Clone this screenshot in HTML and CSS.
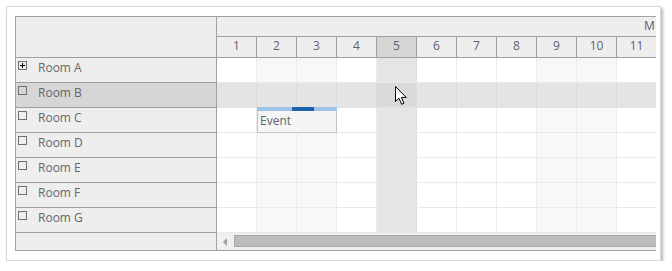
FILE: index.html
```html
<!DOCTYPE html>
<html>
<head>
<meta charset="utf-8">
<link rel="stylesheet" href="styles.css">
</head>
<body>
<div class="panel">
  <div class="scheduler">
    <div class="left">
      <div class="corner"></div>
      <div class="res"><span class="box plus"></span><span class="name">Room A</span></div>
      <div class="res hl"><span class="box"></span><span class="name">Room B</span></div>
      <div class="res"><span class="box"></span><span class="name">Room C</span></div>
      <div class="res"><span class="box"></span><span class="name">Room D</span></div>
      <div class="res"><span class="box"></span><span class="name">Room E</span></div>
      <div class="res"><span class="box"></span><span class="name">Room F</span></div>
      <div class="res"><span class="box"></span><span class="name">Room G</span></div>
      <div class="left-scroll"></div>
    </div>
    <div class="right">
      <div class="inner">
        <div class="hdr-top"><span class="month">M</span></div>
        <div class="hdr-days">
          <div class="day">1</div><div class="day">2</div><div class="day">3</div><div class="day">4</div>
          <div class="day cur">5</div><div class="day">6</div><div class="day">7</div><div class="day">8</div>
          <div class="day">9</div><div class="day">10</div><div class="day">11</div>
        </div>
        <div class="grid">
          <div class="row"><div class="c"></div><div class="c we"></div><div class="c we"></div><div class="c"></div><div class="c cur"></div><div class="c"></div><div class="c"></div><div class="c"></div><div class="c we"></div><div class="c we"></div><div class="c"></div></div>
          <div class="row hl"><div class="c"></div><div class="c we"></div><div class="c we"></div><div class="c"></div><div class="c cur"></div><div class="c"></div><div class="c"></div><div class="c"></div><div class="c we"></div><div class="c we"></div><div class="c"></div></div>
          <div class="row"><div class="c"></div><div class="c we"></div><div class="c we"></div><div class="c"></div><div class="c cur"></div><div class="c"></div><div class="c"></div><div class="c"></div><div class="c we"></div><div class="c we"></div><div class="c"></div>
            <div class="event"><div class="bar"><span class="dur"></span></div><div class="ev-body">Event</div></div>
          </div>
          <div class="row"><div class="c"></div><div class="c we"></div><div class="c we"></div><div class="c"></div><div class="c cur"></div><div class="c"></div><div class="c"></div><div class="c"></div><div class="c we"></div><div class="c we"></div><div class="c"></div></div>
          <div class="row"><div class="c"></div><div class="c we"></div><div class="c we"></div><div class="c"></div><div class="c cur"></div><div class="c"></div><div class="c"></div><div class="c"></div><div class="c we"></div><div class="c we"></div><div class="c"></div></div>
          <div class="row"><div class="c"></div><div class="c we"></div><div class="c we"></div><div class="c"></div><div class="c cur"></div><div class="c"></div><div class="c"></div><div class="c"></div><div class="c we"></div><div class="c we"></div><div class="c"></div></div>
          <div class="row"><div class="c"></div><div class="c we"></div><div class="c we"></div><div class="c"></div><div class="c cur"></div><div class="c"></div><div class="c"></div><div class="c"></div><div class="c we"></div><div class="c we"></div><div class="c"></div></div>
          <svg class="cursor" width="14" height="20" viewBox="0 0 14 20"><path d="M0.5 0.5 L0.5 15.5 L4 12.2 L6.6 18.3 L8.9 17.3 L6.4 11.4 L11.2 11.4 Z" fill="#fff" stroke="#000" stroke-width="1" stroke-linejoin="miter"/></svg>
        </div>
        <div class="hscroll"><span class="arrow"></span><span class="thumb"></span></div>
      </div>
    </div>
  </div>
</div>
</body>
</html>
```
FILE: styles.css
```css
* { box-sizing: border-box; }
body {
  margin: 0;
  background: #fff;
  font-family: "Open Sans", "Noto Sans", sans-serif;
  font-size: 12px;
  color: #666;
}
.panel {
  margin: 6px 0 0 6px;
  width: 655px;
  height: 255px;
  border: 1px solid #d8d8d8;
  box-shadow: 2px 2px 3px rgba(0,0,0,0.28);
  padding: 9px 0 0 8px;
  background: #fff;
}
.scheduler {
  display: flex;
  width: 641px;
  border: 1px solid #a0a0a0;
  border-right: none;
  overflow: hidden;
}
.left {
  width: 201px;
  flex: none;
  background: #eeeeee;
  border-right: 1px solid #a0a0a0;
}
.corner {
  height: 41px;
  border-bottom: 1px solid #a0a0a0;
}
.res {
  height: 25px;
  border-bottom: 1px solid #a0a0a0;
  display: flex;
  align-items: flex-start;
}
.res.hl { background: #d6d6d6; }
.box {
  width: 9px;
  height: 9px;
  border: 1px solid #707070;
  margin: 3px 0 0 2px;
  flex: none;
  position: relative;
}
.box.plus::before {
  content: "";
  position: absolute;
  left: 1px; top: 3px;
  width: 5px; height: 1px;
  background: #000;
}
.box.plus::after {
  content: "";
  position: absolute;
  left: 3px; top: 1px;
  width: 1px; height: 5px;
  background: #000;
}
.name {
  margin-left: 11px;
  padding-top: 2px;
  line-height: 16px;
}
.left-scroll { height: 17px; }
.right {
  width: 439px;
  flex: none;
  overflow: hidden;
}
.inner { width: 440px; }
.hdr-top {
  height: 20px;
  background: #eeeeee;
  border-bottom: 1px solid #a0a0a0;
  padding-left: 427px;
  line-height: 16px;
  padding-top: 1px;
  white-space: nowrap;
}
.month { color: #5f5878; }
.hdr-days {
  display: flex;
  height: 21px;
  border-bottom: 1px solid #a0a0a0;
  background: #eeeeee;
}
.day {
  width: 40px;
  flex: none;
  border-right: 1px solid #a0a0a0;
  text-align: center;
  line-height: 16px;
  padding-top: 1px;
  color: #646070;
}
.day.cur { background: #d6d6d6; }
.grid { position: relative; }
.row {
  display: flex;
  height: 25px;
  border-bottom: 1px solid #eaeaea;
  position: relative;
}
.c {
  width: 40px;
  flex: none;
  border-right: 1px solid #ececec;
  background: #fff;
}
.c.we { background: #f8f8f8; }
.c.cur { background: #e5e5e5; border-right-color: #dedede; }
.row.hl { border-bottom-color: #e2e2e2; }
.row.hl .c { background: #e4e4e4; border-right-color: #dcdcdc; }
.row.hl .c.cur { background: #dadada; }
.event {
  position: absolute;
  left: 40px;
  top: -1px;
  width: 80px;
  height: 26px;
}
.bar {
  height: 4px;
  background: #9dc4e6;
  position: relative;
}
.dur {
  position: absolute;
  left: 35px;
  width: 22px;
  top: 0;
  height: 4px;
  background: #1c63a8;
}
.ev-body {
  height: 22px;
  background: #f5f5f5;
  border: 1px solid #c4c4c4;
  border-top: none;
  padding: 2px 0 0 2px;
  line-height: 16px;
  color: #666;
}
.cursor {
  position: absolute;
  left: 178px;
  top: 28px;
}
.hscroll {
  height: 17px;
  background: #f0f0f0;
  position: relative;
  display: flex;
  align-items: flex-start;
}
.arrow {
  margin: 5px 0 0 6px;
  width: 0; height: 0;
  border-top: 4px solid transparent;
  border-bottom: 4px solid transparent;
  border-right: 4px solid #a0a0a0;
}
.thumb {
  margin: 2px 0 0 7px;
  height: 12px;
  flex: 1;
  background: #bcbcbc;
  border: 1px solid #a8a8a8;
}
```
